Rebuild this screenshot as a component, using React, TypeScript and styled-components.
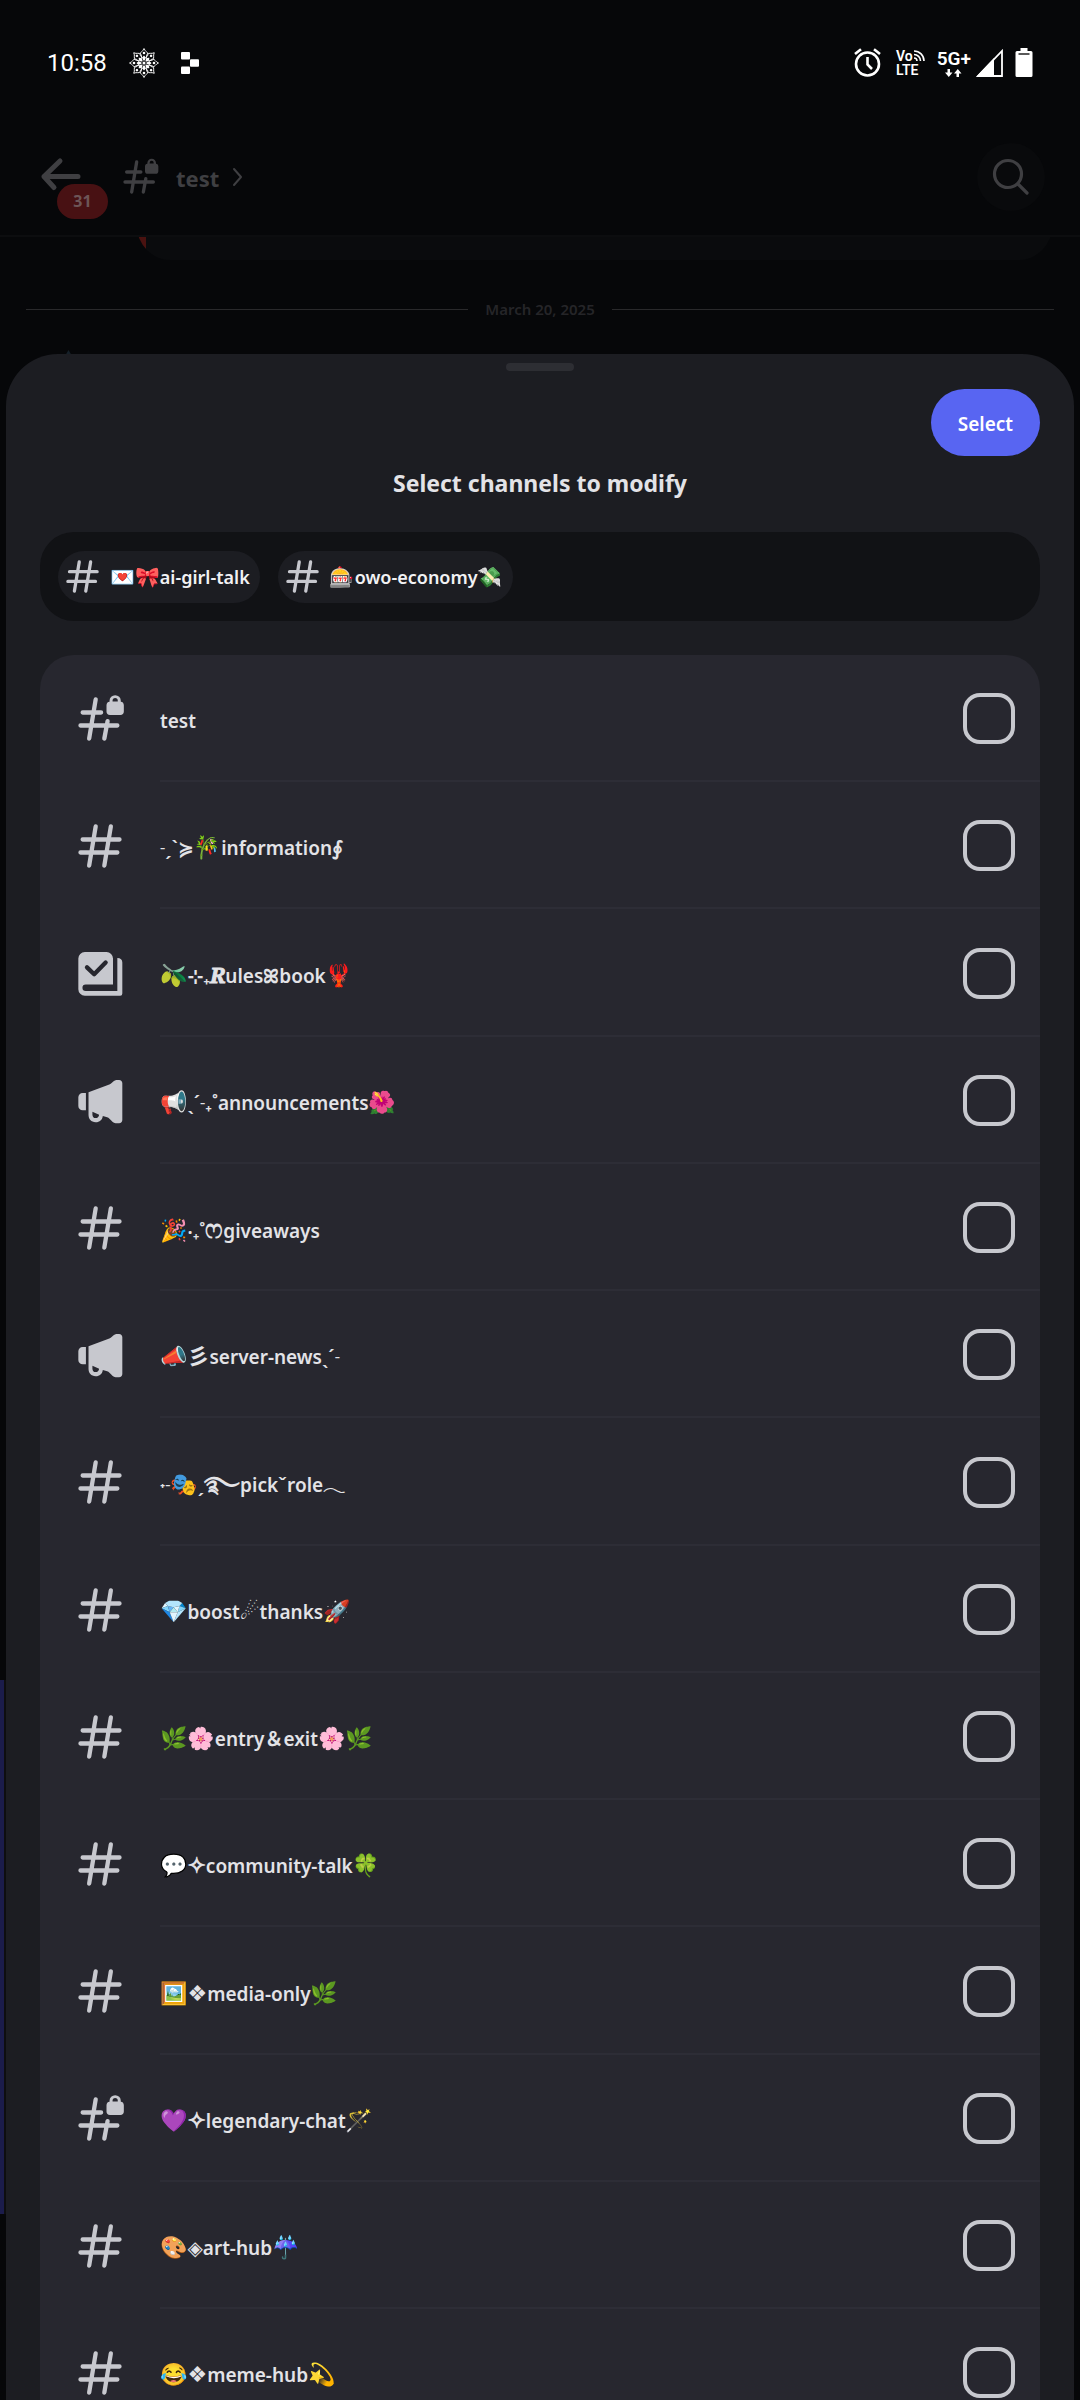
import React from "react";
import styled, { createGlobalStyle } from "styled-components";

const color = {
  base: "#060709",
  sheet: "#1c1d22",
  well: "#111215",
  card: "#27272f",
  line: "#2d2d36",
  icon: "#c7c8ce",
  text: "#e3e3e7",
  dim: "#3f3f42",
  accent: "#5865f2",
};

const GlobalStyle = createGlobalStyle`
  *, *::before, *::after { box-sizing: border-box; }
  body {
    margin: 0;
    background: ${color.base};
    color: ${color.text};
    font-family: "Noto Sans", "Noto Sans CJK JP", "DejaVu Sans", sans-serif;
  }
  button { font: inherit; border: 0; padding: 0; background: none; color: inherit; }
`;

const Screen = styled.div`
  display: grid;
  grid-template: minmax(0, 1fr) / minmax(0, 1fr);
  height: 100vh;
  overflow: hidden;
`;

const Chat = styled.div`
  grid-area: 1 / 1;
  display: flex;
  flex-direction: column;
  color: ${color.dim};
`;

const StatusBar = styled.div`
  display: flex;
  align-items: center;
  height: 125px;
  padding: 0 47px;
  color: #fff;
`;

const Clock = styled.time`
  font: 400 24px/30px Roboto, "Noto Sans", sans-serif;
`;

const StatusLeft = styled.div`
  display: flex;
  align-items: center;
  gap: 22px;
  flex: 1;
`;

const StatusRight = styled.div`
  display: flex;
  align-items: center;
  gap: 12px;
`;

const Volte = styled.div`
  display: grid;
  gap: 2px;
  margin-left: 3px;
  font: 600 14px/12px Roboto, "Noto Sans", sans-serif;
`;

const VolteTop = styled.span`
  display: flex;
  align-items: center;
`;

const Mobile = styled.div`
  display: flex;
  align-items: center;
  gap: 5px;
`;

const Network = styled.div`
  display: flex;
  flex-direction: column;
  align-items: center;
  font: 600 19px/20px Roboto, "Noto Sans", sans-serif;
`;

const Header = styled.header`
  display: flex;
  align-items: center;
  height: 112px;
  padding: 0 35px 6px 36px;
  border-bottom: 2px solid #0c0d0f;
`;

const BackButton = styled.button`
  position: relative;
  display: flex;
  width: 48px;
  height: 48px;
  align-items: center;
`;

const Badge = styled.span`
  position: absolute;
  left: 21px;
  top: 31px;
  width: 51px;
  height: 35px;
  border-radius: 18px;
  background: #481113;
  color: #6d5557;
  font: 700 16px/35px "Noto Sans", sans-serif;
  text-align: center;
`;

const ChannelTitle = styled.h2`
  display: flex;
  align-items: center;
  gap: 10px;
  flex: 1;
  margin: 0 0 0 36px;
  font: 700 22px/30px "Noto Sans", sans-serif;
`;

const TitleName = styled.span`
  padding: 2px 0 0 6px;
`;

const SearchButton = styled.button`
  display: grid;
  place-items: center;
  width: 68px;
  height: 68px;
  border-radius: 50%;
  background: #090a0c;
`;

const EmbedClip = styled.div`
  display: flex;
  align-items: flex-end;
  height: 23px;
  padding: 0 28px 0 137px;
  overflow: hidden;
`;

const Embed = styled.div`
  flex: 1;
  height: 80px;
  border-radius: 34px;
  background: linear-gradient(to right, #4a1210 9px, #0a0b0d 9px);
`;

const DateDivider = styled.div`
  display: flex;
  align-items: center;
  gap: 17px;
  margin: 37px 26px 29px;
  font: 600 15px/24px "Noto Sans", sans-serif;
  color: #252528;

  &::before,
  &::after {
    content: "";
    flex: 1;
    height: 1px;
    background: #29292b;
  }
`;

const AvatarTip = styled.svg`
  display: block;
  margin-left: 65px;
`;

const Mention = styled.div`
  width: 6px;
  height: 534px;
  margin-top: 1324px;
  border-right: 2px solid #0e0e10;
  background: #1b1c4b;
`;

const SheetArea = styled.div`
  grid-area: 1 / 1;
  z-index: 1;
  display: flex;
  min-height: 0;
  padding: 354px 6px 0;
`;

const Sheet = styled.section`
  display: flex;
  flex: 1;
  flex-direction: column;
  min-width: 0;
  padding: 9px 34px 0;
  border-radius: 52px 52px 0 0;
  background: ${color.sheet};
`;

const Handle = styled.div`
  flex: none;
  align-self: center;
  width: 68px;
  height: 8px;
  border-radius: 4px;
  background: #2d2e33;
`;

const SelectButton = styled.button`
  flex: none;
  align-self: flex-end;
  height: 67px;
  margin-top: 18px;
  padding: 3px 27px 0;
  border-radius: 34px;
  background: ${color.accent};
  color: #fff;
  font-size: 19px;
  font-weight: 600;
`;

const SheetTitle = styled.h1`
  margin: 9px 0 31px;
  font-size: 23px;
  line-height: 36px;
  font-weight: 700;
  text-align: center;
`;

const ChipBox = styled.div`
  display: flex;
  flex: none;
  align-items: center;
  gap: 18px;
  height: 89px;
  padding: 0 18px;
  border-radius: 34px;
  background: ${color.well};
`;

const Chip = styled.button`
  display: flex;
  align-items: center;
  gap: 8px;
  height: 52px;
  padding: 0 10px 0 5px;
  border-radius: 26px;
  background: ${color.sheet};
  color: #f2f2f4;
  font-size: 18px;
  font-weight: 600;
  white-space: nowrap;

  svg { color: ${color.icon}; }
`;

const List = styled.ul`
  flex: 1;
  min-height: 0;
  margin: 34px 0 0;
  padding: 0;
  overflow-y: auto;
  scrollbar-width: none;
  list-style: none;
  border-radius: 34px 34px 0 0;
  background: ${color.card};
`;

const Item = styled.li`
  height: 127px;

  &:nth-child(4n + 3) { height: 128px; }
`;

const Row = styled.label`
  display: grid;
  grid-template-columns: 120px minmax(0, 1fr);
  height: 100%;
  align-items: center;
`;

const IconCell = styled.span`
  display: flex;
  padding-left: 34px;
  color: ${color.icon};
`;

const RowBody = styled.span`
  display: flex;
  align-items: center;
  height: 100%;
  padding-right: 25px;
  border-bottom: 2px solid ${color.line};
`;

const Name = styled.span`
  flex: 1;
  padding-top: 7px;
  font-size: 19px;
  line-height: 28px;
  font-weight: 600;
  white-space: nowrap;
`;

const Emoji = styled.span<{ $size: number }>`
  font-family: "Noto Color Emoji", "Noto Sans", sans-serif;
  font-size: ${(p) => p.$size}px;
  line-height: 1;
`;

const Ornament = styled.span<{ $size: number; $heavy: boolean }>`
  font-family: "DejaVu Sans", "Noto Sans CJK JP", sans-serif;
  font-size: ${(p) => p.$size}px;
  line-height: 1;
  -webkit-text-stroke: ${(p) => (p.$heavy ? "1px currentColor" : "0")};
`;

const ScriptLetter = styled.span`
  font-family: "Liberation Serif", "DejaVu Serif", "STIX Two Math", serif;
  font-size: 22px;
  line-height: 1;
  -webkit-text-stroke: 1px currentColor;
`;

const Check = styled.input`
  appearance: none;
  flex: none;
  width: 52px;
  height: 51px;
  margin: 2px 0 0;
  border: 4px solid ${color.icon};
  border-radius: 17px;

  &:checked { background: ${color.accent}; }
`;

type IconKind = "hash" | "lock" | "rules" | "news";

function ChannelIcon({ kind, size = 52 }: { kind: IconKind; size?: number }) {
  const stroke = { stroke: "currentColor", strokeWidth: 2, strokeLinecap: "round" as const, fill: "none" };
  return (
    <svg width={size} height={size} viewBox="0 0 24 24" fill="currentColor" aria-hidden="true">
      {kind === "hash" && <path {...stroke} d="M10 3 7 21M17 3l-3 18M4 9h17M3 15h17" />}
      {kind === "lock" && (
        <>
          <path {...stroke} d="M10 3 7 21M15.500 13 14 21M4 9h8.500M3 15h17" />
          <path d="M15 5.600c0-.9.5-1.500 1.400-1.600V3.600a2.600 2.600 0 0 1 5.200 0V4c.9.1 1.400.7 1.400 1.600v2.900c0 1-.6 1.600-1.600 1.600h-4.800c-1 0-1.600-.6-1.600-1.600V5.600Zm2.800-1.700h2.400v-.4a1.200 1.200 0 0 0-2.400 0v.4Z" />
        </>
      )}
      {kind === "rules" && (
        <>
          <path d="M5 2.300h10a3 3 0 0 1 3 3v12H5.400a1.500 1.500 0 0 0 0 3H20V5.100c1.500 0 2.300.8 2.300 2V21.500a1 1 0 0 1-1 1H5a3 3 0 0 1-3-3V5.300a3 3 0 0 1 3-3Z" />
          <path d="M6 9.400l3.300 3.200 5.300-5.400" fill="none" stroke={color.card} strokeWidth="2" strokeLinecap="round" strokeLinejoin="round" />
        </>
      )}
      {kind === "news" && (
        <>
          <path d="M5.500 8.300v8H4a2 2 0 0 1-2-2v-4a2 2 0 0 1 2-2h1.500Z" />
          <path fillRule="evenodd" d="M6.700 8 16.300 4.400c.7-.3 1.200-.8 1.700-1.300.6-.6 1.200-.8 2-.8h.8c.9 0 1.500.6 1.500 1.500v17c0 .9-.6 1.500-1.500 1.500H20c-1.200 0-2-.4-2.700-1.200-.6-.7-1.200-1.300-2-1.600l-2-.6c-.3 1.800-1.400 2.900-3.300 2.900-2.100 0-3.300-1.400-3.300-3.400V8Zm1.800 9v1.200c0 1.100.6 1.700 1.500 1.700s1.400-.6 1.600-1.600L8.500 17Z" />
        </>
      )}
    </svg>
  );
}

function Mandala() {
  const turns = [0, 45, 90, 135, 180, 225, 270, 315];
  return (
    <svg width="30" height="30" viewBox="-15 -15 30 30" fill="none" stroke="#fff" aria-hidden="true">
      {turns.map((a) => (
        <g key={a} transform={`rotate(${a})`} strokeWidth=".9">
          <path d="M0-14.500C-1-11.500-4-11-4-8.500S0-4.500 0-4.500s4-1.500 4-4S1-11.500 0-14.500Z" />
          <circle cy="-10" r="1.300" fill="#fff" stroke="none" />
          <path d="M0-2C-2-4-2-6 0-7.500 2-6 2-4 0-2Z" fill="#fff" stroke="none" />
        </g>
      ))}
      <circle r="1.500" fill="#fff" stroke="none" />
    </svg>
  );
}

const EMOJI = /(\p{Extended_Pictographic}\uFE0F|\p{Emoji_Presentation})/u;
const PIECES = /(\p{Extended_Pictographic}\uFE0F|\p{Emoji_Presentation}|[✧❖◈ෆ∮彡࿐𝑹]|☄\uFE0E)/u;
const HEAVY = "✧";
const ornamentSize: Record<string, number> = {
  "✧": 22,
  "❖": 22,
  "◈": 20,
  "∮": 20,
  "彡": 22,
  "࿐": 22,
  "☄\uFE0E": 22,
  "ෆ": 26,
};

function ChannelName({ name, emojiSize = 22 }: { name: string; emojiSize?: number }) {
  return (
    <>
      {name.split(PIECES).map((piece, i) => {
        if (piece in ornamentSize)
          return <Ornament key={i} $size={ornamentSize[piece]} $heavy={piece === HEAVY}>{piece}</Ornament>;
        if (piece === "𝑹") return <ScriptLetter key={i}>{piece}</ScriptLetter>;
        if (EMOJI.test(piece)) return <Emoji key={i} $size={emojiSize}>{piece}</Emoji>;
        return piece;
      })}
    </>
  );
}

const channels: { kind: IconKind; name: string }[] = [
  { kind: "lock", name: "test" },
  { kind: "hash", name: "˗ˏˋ≽🎋information∮" },
  { kind: "rules", name: "🫒⊹₊𝑹ulesꕤbook🦞" },
  { kind: "news", name: "📢ˎˊ˗₊˚announcements🌺" },
  { kind: "hash", name: "🎉‧₊˚ෆgiveaways" },
  { kind: "news", name: "📣彡server-newsˎˊ˗" },
  { kind: "hash", name: "˖˗🎭ˏ࿐pickˇrole𓂃" },
  { kind: "hash", name: "💎boost☄\uFE0Ethanks🚀" },
  { kind: "hash", name: "🌿🌸entry＆exit🌸🌿" },
  { kind: "hash", name: "💬✧community-talk🍀" },
  { kind: "hash", name: "🖼️❖media-only🌿" },
  { kind: "lock", name: "💜✧legendary-chat🪄" },
  { kind: "hash", name: "🎨◈art-hub☔" },
  { kind: "hash", name: "😂❖meme-hub💫" },
];

export default function App() {
  return (
    <Screen>
      <GlobalStyle />
      <Chat>
        <StatusBar>
          <StatusLeft>
            <Clock>10:58</Clock>
            <Mandala />
            <svg width="18" height="22" viewBox="0 0 18 22" fill="#fff" aria-hidden="true">
              <rect width="9" height="7.500" rx="1" />
              <rect x="9" y="7.300" width="9" height="7.500" rx="1" />
              <rect y="14.500" width="9" height="7.500" rx="1" />
            </svg>
          </StatusLeft>
          <StatusRight>
            <svg width="27" height="29" viewBox="0 0 27 29" fill="none" stroke="#fff" strokeWidth="2.600" aria-hidden="true">
              <circle cx="13.500" cy="16" r="11.500" />
              <path d="M13.500 9v7.500l4.500 4.500M1 6l6-4.800M26 6l-6-4.800" />
            </svg>
            <Volte>
              <VolteTop>
                Vo
                <svg width="12" height="12" viewBox="0 0 12 12" fill="none" stroke="#fff" strokeWidth="1.600" aria-hidden="true">
                  <path d="M1 1a10 10 0 0 1 10 10M1 4.500A6.500 6.500 0 0 1 7.500 11M1 8a3 3 0 0 1 3 3" />
                </svg>
              </VolteTop>
              <span>LTE</span>
            </Volte>
            <Mobile>
              <Network>
                5G+
                <svg width="17" height="8" viewBox="0 0 17 8" fill="#fff" aria-hidden="true">
                  <path d="M2.500 0h2.500v3.500h2.500L3.800 8 0 3.500h2.500ZM11.500 8H14V4.500h2.500L12.800 0 9 4.500h2.500Z" />
                </svg>
              </Network>
              <svg width="27" height="28" viewBox="0 0 27 28" aria-hidden="true">
                <path d="M26 2v25H2Z" fill="none" stroke="#fff" strokeWidth="1.800" />
                <path d="M18 9v18H1Z" fill="#fff" />
              </svg>
            </Mobile>
            <svg width="18" height="29" viewBox="0 0 18 29" aria-hidden="true">
              <path d="M5.500 0h7v3H16a1.500 1.500 0 0 1 1.500 1.500v23A1.500 1.500 0 0 1 16 29H2A1.500 1.500 0 0 1 .5 27.500v-23A1.500 1.500 0 0 1 2 3h3.500Z" fill="#fff" />
              <path d="M3.500 6h11" stroke="#222" strokeWidth="1.500" />
            </svg>
          </StatusRight>
        </StatusBar>
        <Header>
          <BackButton aria-label="Back">
            <svg width="48" height="40" viewBox="0 0 48 40" fill="none" stroke="currentColor" strokeWidth="5" strokeLinecap="round" strokeLinejoin="round" aria-hidden="true">
              <path d="M42 19.500H8M24 4 8 19.500l10 11" />
            </svg>
            <Badge>31</Badge>
          </BackButton>
          <ChannelTitle>
            <ChannelIcon kind="lock" size={40} />
            <TitleName>test</TitleName>
            <svg width="16" height="20" viewBox="0 0 16 20" fill="none" stroke="currentColor" strokeWidth="2" strokeLinecap="round" strokeLinejoin="round" aria-hidden="true">
              <path d="m5 2 7 8-7 8" />
            </svg>
          </ChannelTitle>
          <SearchButton aria-label="Search">
            <svg width="40" height="40" viewBox="0 0 40 40" fill="none" stroke="currentColor" strokeWidth="3.200" strokeLinecap="round" aria-hidden="true">
              <circle cx="17" cy="17" r="13.500" />
              <path d="m27 27 9 9" />
            </svg>
          </SearchButton>
        </Header>
        <EmbedClip>
          <Embed />
        </EmbedClip>
        <DateDivider>March 20, 2025</DateDivider>
        <AvatarTip width="7" height="6" viewBox="0 0 7 6" aria-hidden="true">
          <path d="M3.500 0 7 6H0Z" fill="#152029" />
        </AvatarTip>
        <Mention />
      </Chat>
      <SheetArea>
        <Sheet>
          <Handle />
          <SelectButton type="button">Select</SelectButton>
          <SheetTitle>Select channels to modify</SheetTitle>
          <ChipBox>
            {["💌🎀ai-girl-talk", "🎰owo-economy💸"].map((name) => (
              <Chip key={name} type="button">
                <ChannelIcon kind="hash" size={39} />
                <span><ChannelName name={name} emojiSize={20} /></span>
              </Chip>
            ))}
          </ChipBox>
          <List>
            {channels.map((c) => (
              <Item key={c.name}>
                <Row>
                  <IconCell><ChannelIcon kind={c.kind} /></IconCell>
                  <RowBody>
                    <Name><ChannelName name={c.name} /></Name>
                    <Check type="checkbox" />
                  </RowBody>
                </Row>
              </Item>
            ))}
          </List>
        </Sheet>
      </SheetArea>
    </Screen>
  );
}
